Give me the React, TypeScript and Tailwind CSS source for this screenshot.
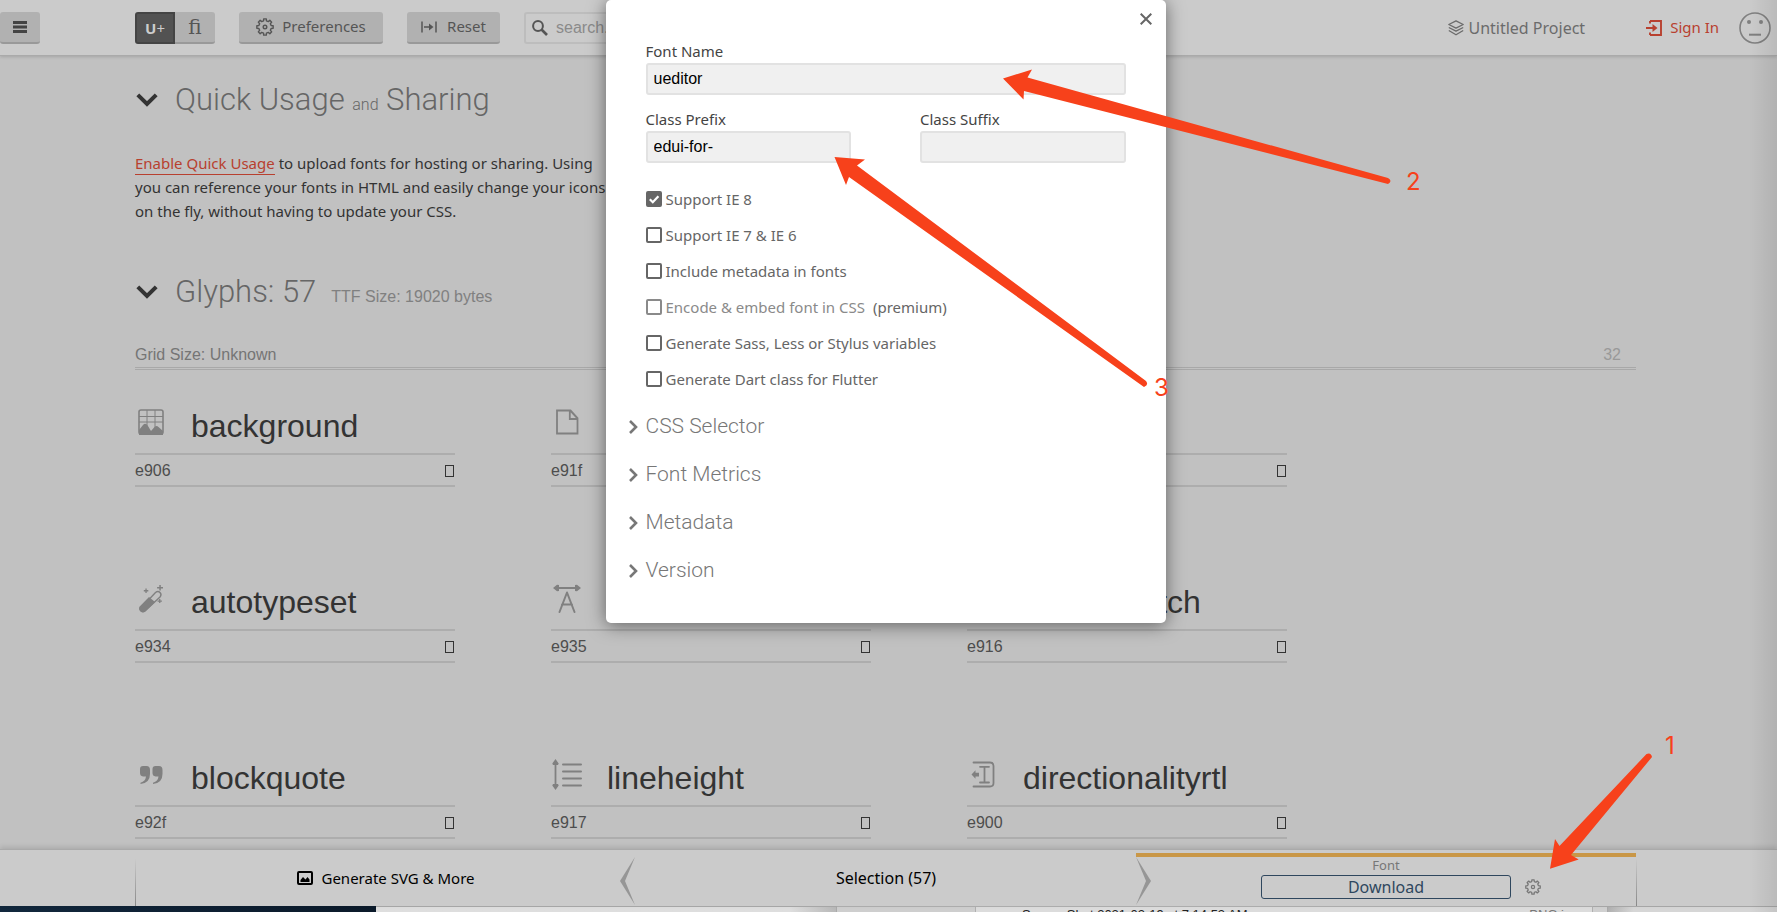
import React from "react";

const UI = "font-['Noto_Sans',sans-serif]";
const SANS = "font-['Liberation_Sans',Arial,sans-serif]";
const TITLE = "font-['Roboto','Noto_Sans',sans-serif] font-light";

function cogOutline(teeth: number, outer: number, inner: number): string {
  const step = (Math.PI * 2) / teeth;
  const points: string[] = [];
  for (let i = 0; i < teeth; i++) {
    const mid = i * step;
    const corners: [number, number][] = [
      [mid - step * 0.29, inner],
      [mid - step * 0.2, outer],
      [mid + step * 0.2, outer],
      [mid + step * 0.29, inner],
    ];
    corners.forEach(([angle, r]) => {
      points.push(`${(12 + r * Math.sin(angle)).toFixed(2)} ${(12 - r * Math.cos(angle)).toFixed(2)}`);
    });
  }
  return `M${points.join("L")}Z`;
}

const COG = cogOutline(8, 11, 8.4);

function Cog({ className }: { className: string }) {
  return (
    <svg viewBox="0 0 24 24" className={className} fill="none" stroke="currentColor" strokeWidth="1.9" strokeLinejoin="round" aria-hidden="true">
      <path d={COG} />
      <circle cx="12" cy="12" r="2.4" />
    </svg>
  );
}

function ChevronDown() {
  return (
    <svg viewBox="0 0 22 14" className="h-3.5 w-[22px]" fill="none" stroke="#333" strokeWidth="4" aria-hidden="true">
      <path d="M1.8 1.8L11 11L20.2 1.8" />
    </svg>
  );
}

const icons: Record<string, React.ReactNode> = {
  background: (
    <g>
      <rect x="4" y="4" width="24" height="24" rx="2" fill="none" stroke="currentColor" strokeWidth="1.6" />
      <path d="M12 4v17M20 4v18M4 10.5h24M4 16h24" fill="none" stroke="currentColor" strokeWidth="1" />
      <path d="M4 24l4-5q2.5-3 5 1l3 5 3.5-4q2-2 4 0l4.5 4v4H4z" />
    </g>
  ),
  page: (
    <path d="M6 4.5h13.5l7 7.5v15.5H6zM18.8 4.5V13h7.7M20 5.5l6 6.5" fill="none" stroke="currentColor" strokeWidth="1.8" />
  ),
  wand: (
    <g>
      <path d="M6 26L20.5 10.5q2.5-2 4.5 0t0 4.5L10 29q-2 1.5-4 0t0-3z" fill="none" stroke="currentColor" strokeWidth="1.4" />
      <path d="M4.2 25L14 15l6 5-9.5 9.3q-2.8 1.8-5 0t-1.3-4.3zM24.3 3h1.5v2h2.2v1.5h-2.2v2h-1.5v-2h-2.2V5h2.2zM10.4 6.5h1.3v1.6h1.6v1.3h-1.6V11h-1.3V9.4H8.8V8.1h1.6zM24.1 17h1.3v1.4h1.5v1.3h-1.5v1.4h-1.3v-1.4h-1.5v-1.3h1.5z" />
    </g>
  ),
  spacing: (
    <g>
      <path d="M6 6h20M8.5 30L16 10.5 23.5 30M11 22.5h10" fill="none" stroke="currentColor" strokeWidth="2" strokeLinecap="round" strokeLinejoin="round" />
      <path d="M2 6l4-3.2L8 3v6l-2 .2zM30 6l-4-3.2L24 3v6l2 .2z" />
    </g>
  ),
  quote: (
    <path d="M8 8h3.5q3.5 0 3.5 4v4q0 9-9.5 10v-1.3q5-1.5 5.5-6.2H8q-3-.5-3-3.5v-4q0-3 3-3zM20.500 8H24q3.500 0 3.500 4v4q0 9-9.500 10v-1.300q5-1.500 5.500-6.200h-3q-3-.5-3-3.500v-4q0-3 3-3z" />
  ),
  lineheight: (
    <g>
      <path d="M12 6.5h18M12 13.5h18M12 20.5h18M12 27.5h18" fill="none" stroke="currentColor" strokeWidth="2" strokeLinecap="round" />
      <path d="M4.5 5v23" fill="none" stroke="currentColor" strokeWidth="1.8" />
      <path d="M4.5 1l3.2 4.5-.7 1.5h-5l-.7-1.5zM4.5 32l3.2-4.5-.7-1.5h-5l-.7 1.5z" />
    </g>
  ),
  rtl: (
    <g>
      <path d="M6.5 4.5H23q3.5 0 3.5 3.5v17q0 3.5-3.5 3.5H6.5M13 8.8h9M13 24.5h9M17.5 9v15.5" fill="none" stroke="currentColor" strokeWidth="1.8" strokeLinecap="round" />
      <path d="M4.5 16.5l4-4.2v2.5H12v3.7H8.5v2.3z" />
    </g>
  ),
};

type Glyph = { icon?: string; name?: string; code?: string };

const glyphs: Glyph[] = [
  { icon: "background", name: "background", code: "e906" },
  { icon: "page", code: "e91f" },
  {},
  { icon: "wand", name: "autotypeset", code: "e934" },
  { icon: "spacing", code: "e935" },
  { name: "formatmatch", code: "e916" },
  { icon: "quote", name: "blockquote", code: "e92f" },
  { icon: "lineheight", name: "lineheight", code: "e917" },
  { icon: "rtl", name: "directionalityrtl", code: "e900" },
];

function GlyphCard({ icon, name, code }: Glyph) {
  return (
    <article className="h-[136px]">
      <div className="flex h-[55px] items-start gap-6 pt-2">
        <svg viewBox="0 0 32 34" className="h-[34px] w-8 shrink-0 text-[#808080]" fill="currentColor" aria-hidden="true">
          {icon ? icons[icon] : null}
        </svg>
        <span className="text-[32px] leading-10 text-[#333]">{name}</span>
      </div>
      <div className="flex h-[34px] items-center justify-between border-y-2 border-[#adadad] pt-0.5 text-base text-[#4d4d4d]">
        <span>{code}</span>
        <span className="mr-px h-3 w-[9px] border border-[#333]" />
      </div>
    </article>
  );
}

const options = [
  { id: "ie8", text: "Support IE 8", checked: true },
  { id: "ie7", text: "Support IE 7 & IE 6" },
  { id: "meta", text: "Include metadata in fonts" },
  { id: "embed", text: "Encode & embed font in CSS", note: "(premium)" },
  { id: "sass", text: "Generate Sass, Less or Stylus variables" },
  { id: "dart", text: "Generate Dart class for Flutter" },
];

const inputClass =
  "h-8 w-full rounded-[3px] border-2 border-[#e2e2e2] bg-[#f0f0f0] px-1.5 text-base text-black outline-none font-['Liberation_Sans',Arial,sans-serif]";

function Field({ id, label, value }: { id: string; label: string; value: string }) {
  return (
    <div>
      <label htmlFor={id} className="block h-6 text-[15px] leading-6 text-[#444]">
        {label}
      </label>
      <input id={id} defaultValue={value} className={inputClass} />
    </div>
  );
}

function Dialog() {
  return (
    <div
      role="dialog"
      aria-label="Font preferences"
      className={`absolute top-0 left-1/2 z-20 w-[560px] -translate-x-[283px] rounded-[5px] bg-white px-10 pt-[39px] pb-7 shadow-[0_2px_18px_rgba(0,0,0,0.5)] ${UI}`}
    >
      <button type="button" aria-label="Close" className="absolute top-[11px] right-3 p-0.5 text-[#666]">
        <svg viewBox="0 0 12 12" className="h-3 w-3" fill="none" stroke="currentColor" strokeWidth="2">
          <path d="M.7.7l10.6 10.6M11.3.7L.7 11.3" />
        </svg>
      </button>
      <Field id="font-name" label="Font Name" value="ueditor" />
      <div className="mt-3 grid grid-cols-2 gap-[69px]">
        <Field id="prefix" label="Class Prefix" value="edui-for-" />
        <Field id="suffix" label="Class Suffix" value="" />
      </div>
      <div className="mt-[18px]">
        {options.map((o) => (
          <div key={o.id} className="flex h-9 items-center text-[15px] text-[#666]">
            <label className={o.note ? "flex items-center gap-1 text-[#8a8a8a]" : "flex items-center gap-1"}>
              <span className="relative flex">
                <input
                  type="checkbox"
                  defaultChecked={o.checked}
                  className="peer h-4 w-4 appearance-none rounded-[2px] border-2 border-current checked:bg-[#666]"
                />
                <svg viewBox="0 0 16 16" className="pointer-events-none absolute inset-0 hidden h-4 w-4 peer-checked:block" fill="none" stroke="#fff" strokeWidth="2.2" aria-hidden="true">
                  <path d="M3.8 8.2l3 3 5.6-6" />
                </svg>
              </span>
              {o.text}
            </label>
            {o.note ? <span className="ml-2">{o.note}</span> : null}
          </div>
        ))}
      </div>
      <div className="mt-1.5 -ml-[17px]">
        {["CSS Selector", "Font Metrics", "Metadata", "Version"].map((title) => (
          <button key={title} type="button" className={`flex h-12 w-full items-center gap-2 text-left text-[21px] text-[#777] ${TITLE}`}>
            <svg viewBox="0 0 9 14" className="h-3.5 w-[9px]" fill="none" stroke="#777" strokeWidth="2.6" aria-hidden="true">
              <path d="M1 1l6 6-6 6" />
            </svg>
            {title}
          </button>
        ))}
      </div>
    </div>
  );
}

const toolButton =
  "flex h-8 items-center justify-center rounded-[3px] border-b-2 border-[#999] bg-[#b1b1b1] text-[15px] text-[#555]";

function Header() {
  return (
    <header className={`flex h-14 shrink-0 items-center border-b border-[#aaa] bg-[#cbcbcb] shadow-[0_1px_3px_rgba(0,0,0,0.15)] ${UI}`}>
      <button type="button" aria-label="Menu" className={`${toolButton} mr-[95px] w-10`}>
        <svg viewBox="0 0 14 12" className="h-3 w-3.5" fill="#444" aria-hidden="true">
          <path d="M0 0h14v3H0zM0 4.5h14v3H0zM0 9h14v3H0z" />
        </svg>
      </button>
      <div className="mr-6 flex">
        <button type="button" className="h-8 w-10 rounded-l-[3px] border-2 border-[#444] bg-[#525252] text-[15px] leading-7 text-[#ccc]">
          <b>U</b>+
        </button>
        <button
          type="button"
          className="flex h-8 w-10 items-center justify-center rounded-r-[3px] border-b-2 border-[#999] bg-[#b1b1b1] font-['DejaVu_Serif',serif] text-xl text-[#555]"
        >
          fi
        </button>
      </div>
      <button type="button" className={`${toolButton} mr-6 w-36 gap-2`}>
        <Cog className="h-[18px] w-[18px]" />
        Preferences
      </button>
      <button type="button" className={`${toolButton} mr-6 w-[93px] gap-2.5`}>
        <svg viewBox="0 0 16 12" className="h-3 w-4" aria-hidden="true">
          <path d="M1 .5v11M15 .5v11M3 6h7" fill="none" stroke="currentColor" strokeWidth="1.5" />
          <path d="M8 2.5L12.5 6 8 9.5z" fill="currentColor" />
        </svg>
        Reset
      </button>
      <label className="flex h-8 w-60 items-center gap-2 rounded-[3px] border-2 border-[#bdbdbd] px-1.5">
        <svg viewBox="0 0 16 16" className="h-4 w-4 shrink-0" fill="none" stroke="#555" aria-hidden="true">
          <circle cx="6" cy="6" r="4.9" strokeWidth="2" />
          <path d="M9.5 9.5l5.5 5.5" strokeWidth="2.6" />
        </svg>
        <input aria-label="Search" placeholder="search..." className={`w-full bg-transparent text-base outline-none placeholder:text-[#8a8a8a] ${SANS}`} />
      </label>
      <div className="ml-auto flex items-center pr-1.5">
        <a href="#project" className="mr-[61px] flex items-center gap-1 text-base text-[#6b6b6b]">
          <svg viewBox="0 0 16 16" className="h-4 w-4" fill="none" stroke="currentColor" strokeWidth="1.3" strokeLinejoin="round" aria-hidden="true">
            <path d="M8 .8l7.2 3.7L8 8.2.8 4.5zM.8 7.5L8 11.2l7.2-3.7M.8 10.5L8 14.8l7.2-4.3" />
          </svg>
          Untitled Project
        </a>
        <a href="#signin" className="mr-5 flex items-center gap-2 text-[15px] text-[#b8402f]">
          <svg viewBox="0 0 16 16" className="h-4 w-4" aria-hidden="true">
            <path d="M4 1h11v14H4M4 1v2.5M4 15v-2.5M0 8h8" fill="none" stroke="currentColor" strokeWidth="1.9" />
            <path d="M6.5 4l5 4-5 4z" fill="currentColor" />
          </svg>
          Sign In
        </a>
        <svg viewBox="0 0 32 32" className="h-8 w-8" fill="none" stroke="#808080" strokeWidth="1.6" aria-hidden="true">
          <circle cx="16" cy="16" r="15" />
          <path d="M10 22.7h12" strokeWidth="2" />
          <circle cx="10" cy="10" r="2" fill="#808080" stroke="none" />
          <circle cx="22" cy="10" r="2" fill="#808080" stroke="none" />
        </svg>
      </div>
    </header>
  );
}

function Arrows() {
  return (
    <svg viewBox="0 0 1777 912" className="pointer-events-none absolute top-0 left-0 z-30 h-[912px] w-[1777px]" fill="#f7411b" aria-hidden="true">
      <path d="M1003 78.5L1032 69.5L1027.5 77.5L1388 178Q1393 181 1388 184L1024 91L1023.5 99.5Z" />
      <path d="M834.5 157L865 159.5L857 165.5L1146 381Q1149 385 1144 387L849 177L846 185Z" />
      <path d="M1550 868.7L1555 839L1559.5 846L1646.5 754Q1651 752 1652 757L1571 855L1578.7 859.5Z" />
    </svg>
  );
}

const markClass = "pointer-events-none absolute z-30 font-['Inter',sans-serif] text-2xl leading-6 text-[#f7411b]";

export default function App() {
  return (
    <div className={`relative flex h-screen flex-col overflow-hidden bg-[#c1c1c1] ${SANS}`}>
      <Header />
      <main className="relative min-h-0 flex-1 overflow-hidden pr-[141px] pl-[135px]">
        <h1 className={`flex h-[88px] items-center gap-[17px] pl-px text-[31px] text-[#666] ${TITLE}`}>
          <ChevronDown />
          <span>
            Quick Usage <span className="text-base">and</span> Sharing
          </span>
        </h1>
        <p className={`mt-[7px] text-[15px] leading-6 whitespace-nowrap text-[#333] ${UI}`}>
          <span className="flex gap-1">
            <a href="#quick" className="h-6 border-b border-[#b8402f] text-[#b8402f]">
              Enable Quick Usage
            </a>
            <span>to upload fonts for hosting or sharing. Using</span>
          </span>
          <span className="block">you can reference your fonts in HTML and easily change your icons</span>
          <span className="block">on the fly, without having to update your CSS.</span>
        </p>
        <h2 className={`mt-[26px] flex h-[86px] items-center gap-[17px] pl-px text-[31px] text-[#666] ${TITLE}`}>
          <ChevronDown />
          <span>
            Glyphs: 57
            <span className="ml-[15px] font-['Liberation_Sans',Arial,sans-serif] text-base font-normal text-[#808080]">TTF Size: 19020 bytes</span>
          </span>
        </h2>
        <div className="mt-[7px] flex h-[25px] items-center justify-between pr-[15px] text-base text-[#757575]">
          <span>Grid Size: Unknown</span>
          <span className="text-[#999]">32</span>
        </div>
        <div className="h-[3px] border-y border-[#a8a8a8]" />
        <div className="mt-7 grid grid-cols-[repeat(3,320px)] gap-x-24 gap-y-10">
          {glyphs.map((g, i) => (
            <GlyphCard key={i} {...g} />
          ))}
        </div>
      </main>
      <footer className={`relative flex h-[57px] shrink-0 border-t border-[#aaa] bg-[#cbcbcb] pr-[140px] pl-[135px] shadow-[0_-2px_5px_rgba(0,0,0,0.12)] ${UI}`}>
        <span className="mt-2 w-px bg-linear-to-b from-transparent to-[#888]" />
        <button type="button" className="flex flex-1 items-center justify-center gap-2 text-[15px] text-black">
          <svg viewBox="0 0 16 14" className="h-3.5 w-4" aria-hidden="true">
            <rect x="1" y="1" width="14" height="12" rx="1" fill="none" stroke="currentColor" strokeWidth="2" />
            <path d="M3.5 11V9l2.500-3 2.500 2.500L10.500 6l2 2.500V11z" fill="currentColor" />
          </svg>
          Generate SVG &amp; More
        </button>
        <button type="button" className="relative flex-1 text-base text-black">
          <svg viewBox="0 0 15 48" className="absolute top-[7px] -left-4 h-12 w-[15px]" fill="#969696" aria-hidden="true">
            <path d="M15 0L0 24l15 24L5 24z" />
          </svg>
          Selection (57)
          <svg viewBox="0 0 15 48" className="absolute top-[7px] -right-[15px] h-12 w-[15px]" fill="#969696" aria-hidden="true">
            <path d="M0 0l15 24L0 48l10-24z" />
          </svg>
        </button>
        <div className="mt-[3px] flex flex-1 flex-col items-center border-t-4 border-[#c99747]">
          <span className="h-[18px] text-[13px] leading-[17px] text-[#777]">Font</span>
          <div className="flex w-[280px] translate-x-[15px] items-center justify-between">
            <button type="button" className="h-6 w-[250px] rounded-[3px] border border-[#2f475e] text-base leading-[22px] text-[#2f475e]">
              Download
            </button>
            <button type="button" aria-label="Font settings" className="text-[#777]">
              <Cog className="h-4 w-4" />
            </button>
          </div>
        </div>
        <span className="mt-2 w-px bg-linear-to-b from-transparent to-[#888]" />
      </footer>
      <div className="flex h-1.5 shrink-0 overflow-hidden bg-[#dcdcdc]">
        <span className="w-[376px] bg-linear-to-r from-[#12283d] via-[#0e2033] to-[#0b1a2a]" />
        <span className="w-[461px] border-t border-r border-[#aaa] bg-linear-to-r from-[#dedede] via-[#dedede] via-90% to-[#b8b8b8]" />
        <span className="w-[139px] border-t border-r border-[#b0b0b0] bg-[#cecece]" />
        <span className="flex flex-1 justify-between border-t border-r border-[#b0b0b0] pr-7 pl-[46px] text-[13px] leading-4 text-[#222]">
          <span>Screen Shot 2021-02-19 at 7.14.53 AM</span>
          <span className="text-[#777]">PNG i</span>
        </span>
        <span className="w-[15px] border-t border-r border-[#aaa] bg-[#d0d0d0]" />
        <span className="w-[169px] border-t border-[#aaa] bg-linear-to-r from-[#b0b0b0] via-[#d6d6d6] via-15% to-[#d6d6d6]" />
      </div>
      <div className="pointer-events-none absolute top-0 right-0 h-full w-7 bg-linear-to-r from-transparent to-black/8" />
      <Dialog />
      <Arrows />
      <span className={`${markClass} top-[170px] left-[1406px]`}>2</span>
      <span className={`${markClass} top-[376px] left-[1154px]`}>3</span>
      <span className={`${markClass} top-[734px] left-[1665px]`}>1</span>
    </div>
  );
}
